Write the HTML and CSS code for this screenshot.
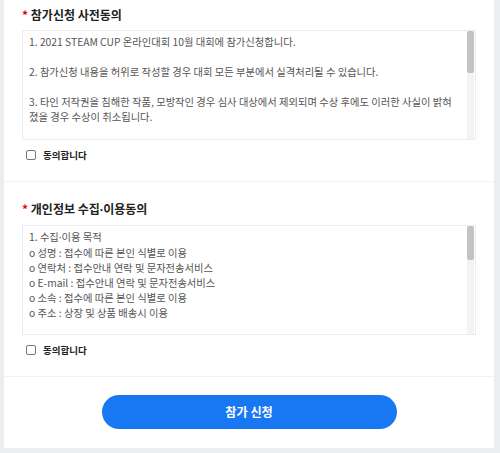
FILE: index.html
```html
<!DOCTYPE html>
<html>
<head>
    <meta charset="utf-8">
    <title>참가신청</title>
    <link rel="stylesheet" href="styles.css">
</head>
<body>
    <div class="card">
        <div class="section first">
            <h2 class="title"><span class="req">*</span> 참가신청 사전동의</h2>
            <div class="terms">
                <div class="terms-text">
                    <p>1. 2021 STEAM CUP 온라인대회 10월 대회에 참가신청합니다.</p>
                    <p>2. 참가신청 내용을 허위로 작성할 경우 대회 모든 부분에서 실격처리될 수 있습니다.</p>
                    <p>3. 타인 저작권을 침해한 작품, 모방작인 경우 심사 대상에서 제외되며 수상 후에도 이러한 사실이 밝혀졌을 경우 수상이 취소됩니다.</p>
                    <p>4. 제출된 작품의 저작권은 참가자에게 있으며, 주최측은 대회 홍보 목적으로 작품을 활용할 수 있습니다.</p>
                    <p>5. 대회 일정 및 세부 사항은 주최측 사정에 따라 변경될 수 있습니다.</p>
                </div>
                <div class="scrollbar"><div class="thumb"></div></div>
            </div>
            <label class="agree"><input type="checkbox"> 동의합니다</label>
        </div>

        <div class="section second">
            <h2 class="title"><span class="req">*</span> 개인정보 수집<span class="dot">·</span>이용동의</h2>
            <div class="terms">
                <div class="terms-text">
                    <p>1. 수집<span class="dot">·</span>이용 목적<br>
                    o 성명 : 접수에 따른 본인 식별로 이용<br>
                    o 연락처 : 접수안내 연락 및 문자전송서비스<br>
                    o E-mail : 접수안내 연락 및 문자전송서비스<br>
                    o 소속 : 접수에 따른 본인 식별로 이용<br>
                    o 주소 : 상장 및 상품 배송시 이용</p>
                    <p>2. 수집 항목<br>
                    o 필수 : 성명, 연락처, E-mail, 소속, 주소</p>
                </div>
                <div class="scrollbar"><div class="thumb short"></div></div>
            </div>
            <label class="agree"><input type="checkbox"> 동의합니다</label>
        </div>

        <div class="actions">
            <button type="button">참가 신청</button>
        </div>
    </div>
</body>
</html>
```

FILE: styles.css
```css
* {
    box-sizing: border-box;
}

body {
    margin: 0;
    padding: 0;
    background-color: #ebedf1;
    font-family: "Noto Sans CJK KR", "Noto Sans", sans-serif;
    color: #222;
}

.card {
    width: 490px;
    margin: 0 0 6px 4px;
    background-color: #fff;
}

.section {
    padding: 6px 18px 16px;
    border-bottom: 1px solid #f2f2f4;
}

.section.second {
    padding-top: 18px;
}

.title {
    margin: 0 0 6px;
    font-size: 12px;
    line-height: 18px;
    font-weight: bold;
    color: #222;
}

.req {
    color: #e60012;
}

.dot {
    font-family: "Noto Sans", sans-serif;
}

.terms {
    display: flex;
    height: 110px;
    border: 1px solid #ececf0;
    overflow: hidden;
}

.terms-text {
    flex: 1;
    padding: 3px 6px;
    overflow: hidden;
    font-size: 10.3px;
    line-height: 15px;
    color: #555;
}

.terms-text p {
    margin: 0 0 15px;
}

.scrollbar {
    width: 7px;
    margin-right: 1px;
    background-color: #f3f3f3;
}

.thumb {
    height: 42px;
    background-color: #c3c3c3;
    border-radius: 2px;
}

.thumb.short {
    height: 34px;
}

.agree {
    display: flex;
    align-items: center;
    height: 20px;
    margin-top: 5px;
    padding-left: 4px;
    font-size: 9.5px;
    font-weight: bold;
    color: #222;
}

.agree input {
    appearance: none;
    -webkit-appearance: none;
    width: 10px;
    height: 10px;
    margin: 0 7px 0 0;
    border: 1px solid #777;
    border-radius: 2px;
    background-color: #fff;
}

.actions {
    display: flex;
    justify-content: center;
    padding: 18px 0 19px;
}

button {
    width: 295px;
    height: 34px;
    border: none;
    border-radius: 17px;
    background-color: #1877f2;
    color: #fff;
    font-family: inherit;
    font-size: 12.2px;
    font-weight: bold;
    cursor: pointer;
}
```
